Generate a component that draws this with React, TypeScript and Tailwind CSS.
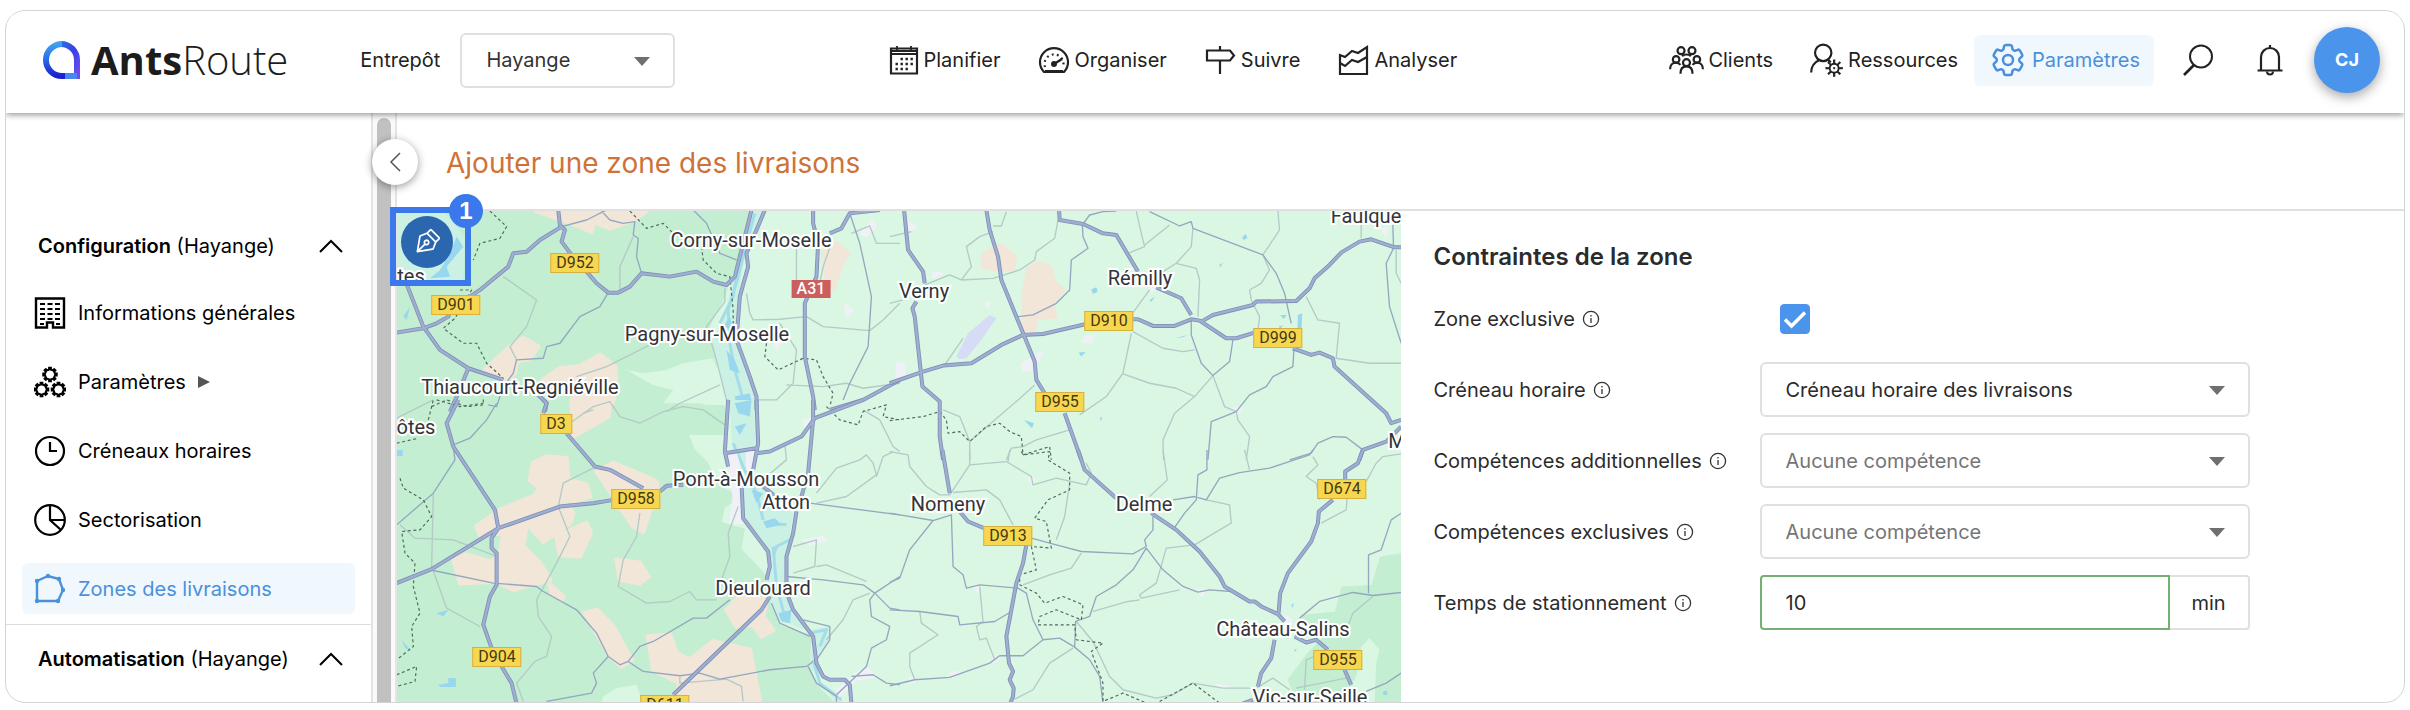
import React, { useState } from 'react'
import { HiOutlineCog6Tooth } from 'react-icons/hi2'
import { PiPenNib } from 'react-icons/pi'

/* ---------- Icons ---------- */

interface IconProps {
  className?: string
}

// Closed outline of a gear wheel with square teeth
function gearPath(cx: number, cy: number, teeth: number, outer: number, inner: number) {
  const step = (Math.PI * 2) / teeth
  const points: string[] = []
  for (let i = 0; i < teeth; i++) {
    const a = i * step - Math.PI / 2
    const corners = [
      [inner, a - step * 0.24],
      [outer, a - step * 0.17],
      [outer, a + step * 0.17],
      [inner, a + step * 0.24],
    ]
    corners.forEach(([r, t]) => points.push(`${(cx + r * Math.cos(t)).toFixed(2)} ${(cy + r * Math.sin(t)).toFixed(2)}`))
  }
  return `M${points.join('L')}Z`
}

function Icon({ className = 'size-8', children }: IconProps & { children: React.ReactNode }) {
  return (
    <svg
      viewBox="0 0 32 32"
      className={`shrink-0 ${className}`}
      fill="none"
      stroke="currentColor"
      strokeWidth="2"
      aria-hidden="true"
    >
      {children}
    </svg>
  )
}

function CalendarIcon() {
  return (
    <Icon>
      <path d="M3 4.5h26v25H3zM3 10h26" strokeWidth="2.2" />
      <path d="M3 7h26M9 2v5M23 2v5" strokeWidth="1.8" />
      <path d="M12.500 15h13" strokeWidth="2.400" strokeDasharray="2.400 2.600" />
      <path d="M7.500 20h18M7.500 25h13" strokeWidth="2.400" strokeDasharray="2.400 2.600" />
    </Icon>
  )
}

function GaugeIcon() {
  return (
    <Icon>
      <path d="M6 28a14 14 0 1 1 20 0z" strokeLinejoin="round" strokeWidth="2.2" />
      <path d="M7 27.500h18" strokeWidth="3" />
      <path d="M7 23a9.500 9.500 0 1 1 18 0" strokeDasharray="1.800 3.400" strokeWidth="2.200" />
      <circle cx="16" cy="20" r="2" fill="currentColor" />
      <path d="m16 20 8-5" strokeWidth="2.600" />
    </Icon>
  )
}

function SignpostIcon() {
  return (
    <Icon>
      <path d="M2 6.500h23l4 5-4 5H2zM15 2v4M15 17v13" strokeWidth="2.200" />
    </Icon>
  )
}

function ChartIcon() {
  return (
    <Icon>
      <path d="M2 30V11l5 2 7-6 6 2 9-6v27z" strokeWidth="2.200" />
      <path d="m2 19 5 3 7-6 6 2 9-5" strokeWidth="2.200" />
    </Icon>
  )
}

function ClientsIcon() {
  return (
    <Icon className="size-[35px]">
      <circle cx="11" cy="7" r="3.200" />
      <circle cx="21" cy="7" r="3.200" />
      <circle cx="6.500" cy="15" r="3" />
      <circle cx="25.500" cy="15" r="3" />
      <circle cx="16" cy="18" r="3.200" />
      <path d="M1 24c0-3.500 2-6 5.500-6 2 0 3 .8 4 2M31 24c0-3.500-2-6-5.500-6-2 0-3 .8-4 2M10.500 28c0-4 2-6.600 5.500-6.600s5.500 2.600 5.500 6.600" />
      <path d="M12 12c1-1 2.500-1.500 4-1.500s3 .5 4 1.500" />
    </Icon>
  )
}

function ResourcesIcon() {
  return (
    <Icon className="size-[35px]">
      <circle cx="13" cy="9" r="7.500" />
      <path d="M2 27c0-6 3-9.500 7.500-11.500M17 15.500l3 2" />
      <path d={gearPath(23, 23, 8, 8, 5)} fill="currentColor" stroke="none" />
      <circle cx="23" cy="23" r="3.200" fill="white" stroke="none" />
      <circle cx="23" cy="23" r="1" fill="currentColor" stroke="none" />
    </Icon>
  )
}

function SearchIcon() {
  return (
    <Icon>
      <circle cx="19" cy="12.500" r="11" />
      <path d="M12 21 2 31" strokeWidth="2.600" />
    </Icon>
  )
}

function BellIcon() {
  return (
    <Icon>
      <path d="M7 26V13a9 9 0 0 1 18 0v13M3.500 26.500h25M16 1v3" strokeWidth="2.200" />
      <path d="M13 27.500c0 4 6 4 6 0" />
    </Icon>
  )
}

function BuildingIcon() {
  return (
    <Icon>
      <path d="M2 1.500h28v29H19v-5h-6v5H2z" strokeWidth="2.400" />
      <path d="M6 7h20M6 12h20M6 17h20M6 22h20" strokeWidth="2" strokeDasharray="5 2.500" />
      <path d="M6 27h4M22 27h4" />
    </Icon>
  )
}

function GearsIcon() {
  return (
    <Icon>
      <path d={gearPath(16, 8.5, 8, 6.8, 5)} />
      <path d={gearPath(7.5, 23.5, 8, 6.8, 5)} />
      <path d={gearPath(24.5, 23.5, 8, 6.8, 5)} />
    </Icon>
  )
}

function ClockIcon() {
  return (
    <Icon>
      <circle cx="16" cy="16" r="14" strokeWidth="2.200" />
      <path d="M16 7v9h7" strokeWidth="2.200" />
    </Icon>
  )
}

function PieIcon() {
  return (
    <Icon>
      <circle cx="16" cy="16" r="14.800" strokeWidth="2.200" />
      <path d="M16 1v15l11 10M16 16h15" strokeWidth="2.200" />
    </Icon>
  )
}

function ZoneIcon() {
  const corners = [
    [3, 8],
    [14, 3],
    [25, 6],
    [29, 17],
    [24, 28],
    [3, 28],
  ]
  return (
    <Icon>
      <path d="M3 8 14 3l11 3 4 11-5 11H3z" strokeWidth="2.400" />
      {corners.map(([x, y]) => (
        <circle key={`${x}-${y}`} cx={x} cy={y} r="2.2" fill="currentColor" stroke="none" />
      ))}
    </Icon>
  )
}

function ChevronUp() {
  return (
    <svg viewBox="0 0 24 14" className="h-3.5 w-6" fill="none" stroke="currentColor" strokeWidth="2" aria-hidden="true">
      <path d="M1 13 12 2l11 11" />
    </svg>
  )
}

function Caret({ className }: IconProps) {
  return (
    <svg viewBox="0 0 16 9" className={className} fill="#6f6f6f" aria-hidden="true">
      <path d="M0 0h16L8 9z" />
    </svg>
  )
}

function InfoIcon() {
  return (
    <svg viewBox="0 0 18 18" className="size-[18px] shrink-0" fill="none" stroke="#333" aria-hidden="true">
      <circle cx="9" cy="9" r="7.600" strokeWidth="1.300" />
      <path d="M9 8v5M9 5v1.500" strokeWidth="1.300" />
    </svg>
  )
}

function Logo() {
  return (
    <a href="#" className="flex items-center gap-2.5 text-[#1c1c1c]" aria-label="AntsRoute">
      <svg viewBox="0 0 40 40" className="size-10" fill="none" aria-hidden="true">
        <defs>
          <linearGradient id="logo-right" x1="0" y1="0" x2="1" y2="1">
            <stop offset="0" stopColor="#2a6fe0" />
            <stop offset=".5" stopColor="#3a3fe6" />
            <stop offset="1" stopColor="#6b4df0" />
          </linearGradient>
          <linearGradient id="logo-left" x1="0" y1="0" x2="0" y2="1">
            <stop offset="0" stopColor="#3f9ff0" />
            <stop offset=".5" stopColor="#2b6ae6" />
            <stop offset="1" stopColor="#1a1fd0" />
          </linearGradient>
        </defs>
        <path d="M20 4a16 16 0 0 1 16 16v16H20" stroke="url(#logo-right)" strokeWidth="6" />
        <path d="M21 4a16 16 0 0 0 0 32h3" stroke="url(#logo-left)" strokeWidth="6" />
        <path d="M24 36h12" stroke="#4a86f0" strokeWidth="6" />
      </svg>
      <span className="font-['Open_Sans',sans-serif] text-[40px] leading-none font-light">
        <span className="font-bold">Ants</span>Route
      </span>
    </a>
  )
}

/* ---------- Map ---------- */

interface Tile {
  x: number
  y: number
  forest?: string
  clearing?: string
  fields?: string
  town?: string
  airport?: string
  valley?: string
  water?: string
  stream?: string
  minor: string
  medium: string
  border: string
  major: string
}

// Each tile is drawn at three units per pixel from its own corner
const tiles: Tile[] = [
  {
    x: -17,
    y: -101,
    forest: 'M40 290H1115L1080 430 1050 500 1030 560 985 650 1005 740 1010 830 1040 910H40Z',
    clearing: 'M740 780 790 790 860 780 910 760 1000 745 1030 830 1045 905 960 880 850 880 880 840 820 825Z',
    fields:
      'M470 303H800L760 330 690 355 640 335 635 365 600 350 560 335ZM390 710 430 685 475 710 450 745 410 755 405 790 370 815 315 780ZM490 810 540 775 600 770 660 735 705 770 710 830 690 910H575L580 850ZM1330 430 1370 400 1405 430 1390 450 1360 535 1345 530Z',
    town: 'M1440 370 1480 330 1490 345 1460 380ZM1395 580 1420 600 1400 620ZM1180 690 1210 690 1190 720Z',
    valley:
      'M50 303H190L255 380 250 510H50ZM1115 300H1150L1110 400 1095 440 1075 560 1070 690 1110 800 1130 905H1050L1010 740 1000 690 1040 600 1060 500 1085 420Z',
    water:
      'M230 380 250 410 200 470 210 500 150 505 180 480 210 430ZM1040 720 1065 750 1080 790 1050 780ZM1065 860 1110 850 1120 895 1070 890ZM1030 650 1050 620 1060 660ZM70 620 90 590 80 630Z',
    stream: 'M1125 310 1100 400 1075 500 1045 600 1050 700 1065 780 1085 850 1090 900M1080 440 1060 560 1020 640',
    minor:
      'M760 380 720 470 720 540M370 500 470 570 440 650 390 710 410 750M1035 535V575L980 650 1010 750 1045 890M1250 415V560M1355 400 1330 470 1320 520M1100 550 1110 610 1120 630 1200 628 1280 620 1330 650 1470 662 1510 630 1560 580M1200 640 1250 720 1240 820 1190 870 1130 870M1220 825 1330 830 1400 820 1450 835 1560 820M1415 370 1470 348 1490 400 1560 400M590 800 680 770 810 705M1020 825 900 880 860 905M640 900 610 910',
    medium:
      'M685 548 660 590 600 620 540 700 500 710 490 745 410 750 400 790 370 830 350 890 325 885M665 303 690 330 730 340 765 335 760 375 775 385 770 440 785 490M545 350 620 330 680 300M1410 310 1440 400 1475 560 1465 710 1410 820 1390 870M940 300 980 340 1020 430 1070 450',
    border:
      'M330 303 380 350 360 385 300 400 280 450M240 540 275 540 225 625 190 655 250 700 290 700 320 760 370 805M155 890 200 870 260 890 310 885 310 865M750 303 800 355 850 340 880 370M965 410 970 450 1010 490 1050 500 1060 600 1060 640M1160 700 1155 740 1195 780 1270 745 1310 750 1330 800 1360 850 1350 890',
    major:
      'M535 300 540 345 555 360 545 395 575 435M620 485 650 520 685 548 715 548 750 530 785 490 870 500 950 485 1000 515 1040 525 1065 500 1085 420 1115 300M545 350 480 390 440 425 400 430 385 470 300 540 270 560M215 590 205 620 170 640 130 655 50 668M75 510 130 650 180 720 265 775 370 810M265 775 235 850 210 905M470 850 500 880 495 905M1155 300 1130 360 1100 430 1105 470 1080 560 1070 690 1110 800 1130 860V900M1300 300V340L1315 400 1310 500 1275 580V740L1300 860 1305 900M1350 370 1385 355 1410 310 1500 300M1560 810 1450 870 1350 900',
  },
  {
    x: -17,
    y: 189,
    forest:
      'M40 20H1030L1035 100 920 100 940 150 980 190 1010 260 1075 290 1030 320 1020 370 1090 390 1080 450 1110 480 1165 540V600L1200 680 1290 710 1285 800 1310 860 1370 920H40Z',
    clearing: 'M670 890 710 865 770 855 790 912H665Z',
    fields:
      'M575 0H690L685 50 580 110ZM500 170 560 175 565 240 620 255 630 290 580 305 540 290 580 340 570 370 490 425 440 370 430 440 480 490 510 540 400 570 350 545 240 550 220 475 260 465 330 485 360 470 370 400 300 405 290 380 360 330 460 290 480 265 450 240 460 190ZM530 410 620 370 632 400 600 470 540 465ZM650 215 700 190 750 210 830 245 835 290 810 330 790 395 760 380 720 320ZM710 480 780 490 805 530 780 550 720 540ZM510 555 550 590 545 600 515 580ZM615 640 650 630 700 680 755 780 725 800 690 770ZM805 710 870 705 890 760 930 780 1000 725 1110 750 1140 905 880 900 900 850 820 810ZM1040 630 1080 590 1160 600 1150 650 1180 690 1145 710 1120 675 1070 680Z',
    town: 'M1040 150 1070 160 1090 250 1090 370 1050 370 1060 290ZM1100 150H1130L1125 210H1100ZM1270 60 1300 55 1280 95ZM1270 420 1330 410 1340 420 1290 435ZM1370 870 1430 820 1460 800 1490 830 1430 840 1380 890Z',
    valley:
      'M1050 0H1130V140L1110 200 1170 290 1240 340 1220 470 1215 550 1235 640 1290 690 1350 680V720L1300 780 1320 850 1400 912H1370L1290 800 1300 700 1200 660 1165 590 1170 455 1100 360 1060 200Z',
    water:
      'M170 640 205 630 190 650ZM175 855 205 850 205 835 228 835V862L180 862ZM65 720 95 755 75 745ZM1150 365 1185 355 1205 375 1160 385ZM50 150H68V168H50ZM1115 270 1150 280 1130 310ZM1065 10 1115 0 1110 50 1075 40ZM1065 80 1100 70 1080 105ZM1195 640 1235 630 1230 670 1205 665Z',
    stream: 'M1060 130 1090 200 1130 280 1150 360M1160 370 1220 375M1180 440 1190 560 1215 650M1300 780 1320 850 1385 900M1230 420 1190 440 1180 470M1290 700 1340 690 1320 740',
    minor:
      'M160 280 155 500 200 625 300 680M60 375 105 415 220 420 350 470M640 205 550 250 535 320 570 410 530 490 485 572 470 600 475 650 515 710 500 770 465 785 410 850 430 905M780 340 770 410 730 480 715 560 800 610 870 605 930 575 950 600 1010 600M50 55 160 0M690 5 720 50 780 70 850 35 910 20 970 30 1035 75M570 70 640 20 690 5M1075 320 1045 400 1050 470 1025 540M1240 440 1310 420 1305 500 1240 520M1310 500 1340 495 1400 520 1460 545M1310 280 1370 205 1440 180 1460 165 1480 190 1490 225 1400 290 1310 310M1450 30 1500 60 1540 140 1560 155M1490 230 1510 170 1540 155M1340 720 1390 660 1420 600 1470 580M900 830V850L1040 838 1085 860 1090 905M1215 130 1220 180 1160 230',
    medium:
      'M160 512 340 550 470 560 485 572 590 630 650 700 685 770 720 795 745 785 780 740 820 725 940 655 980 655 1050 600M745 785 790 815 900 828 960 820 1020 838 1170 810 1280 800 1300 785M685 770 640 820 650 850 635 880 500 905M220 135 270 115 320 60 350 10M220 140 225 180 160 280 50 375M1290 310 1560 345M1220 530 1330 540 1450 555 1485 580 1530 625 1560 630M1485 580 1560 530M1485 580 1470 600 1475 650 1530 680 1520 720 1475 745 1460 800 1370 885M1175 610 1200 670 1290 710M1415 830 1480 825 1520 850 1560 855M1270 660 1350 680 1350 720 1310 780M1285 800 1310 850 1370 890V912',
    border:
      'M50 130 115 115M145 60 160 0M60 235 70 265 130 300 155 350 120 390 65 395 75 460 105 490 100 560 120 640 95 680 100 740 50 780M50 825 110 800 105 845 50 860M170 0 240 20 310 10M1340 20 1380 60 1435 75 1450 35 1520 15 1510 50 1560 60',
    major:
      'M235 0 200 70 220 140 345 330 355 385 335 415 335 445 350 460V555L330 590 310 675 335 745M365 800 395 850 410 912M50 550 155 508 355 385 540 320 640 310 700 300M840 275 860 258 910 255M490 0 500 10 490 40M560 100 645 200 690 210 790 265M880 885 1145 630 1170 590M1045 0 1035 155 1045 200M1085 250 1090 355 1165 455 1170 500 1160 540M1130 0 1135 130 1120 210M1150 260 1200 300M1035 160 1130 145M1130 160 1170 155 1265 110 1305 55 1450 0M1300 0V60L1285 220 1265 290M1250 335 1240 400 1220 470V550M1225 590 1240 630 1300 710 1310 790 1330 830 1350 840H1395L1410 855 1415 912',
  },
  {
    x: 493,
    y: -11,
    fields:
      'M280 165 330 135 375 170 370 205 330 210 280 200ZM415 210 445 190 480 200 495 250 520 270 490 310 495 350 440 355 430 400 400 405 405 270Z',
    town: 'M20 490 45 490V530L20 535ZM395 490 460 455 430 510 400 515ZM585 410 615 405 605 430 580 425ZM55 65 80 80 55 100ZM130 215 160 220 130 235ZM285 310 300 305 295 325ZM780 255 810 260 785 275ZM1030 625 1060 625 1040 645ZM1475 85 1495 85 1490 110Z',
    airport: 'M200 470 235 400 300 345 320 355 275 420 230 475 210 478Z',
    water:
      'M605 268 620 262 624 275 610 282ZM1225 345 1238 340 1236 385 1224 388ZM1172 345 1192 345 1182 357ZM567 458 588 456 575 470ZM403 660 433 670 427 685ZM1058 112 1068 102 1074 114 1062 120ZM988 195 1000 188 992 202ZM780 300 796 290 785 306ZM1168 380 1180 375 1172 390ZM630 655 637 650 635 665ZM855 415 895 405 880 412Z',
    minor:
      'M350 35 335 78 310 78M505 60 495 115 440 155 435 180 390 210 310 235 215 240 180 225 105 255M215 240 245 200 230 140 270 110 310 95M740 33 755 100 765 140 720 158M765 135 840 75M910 85 905 140 860 190 820 215M860 190 920 205 930 240 925 350M780 270 725 345M1165 33 1170 90 1120 165 1140 210 1115 250 1080 270 1085 300 1110 350 1105 395M1250 290 1285 360 1350 370 1340 475 1440 490 1535 490M730 395 820 445 880 455 915 450M725 400 700 520 650 590 570 645M700 522 780 550 860 565 915 590 970 527 1005 620 1040 635 1045 660 1080 710 1070 780M915 590 855 640 820 720 822 780M435 555 385 600 240 725V780M160 630 210 650 240 725M220 415 165 495M540 690 440 720 400 740 365 745 350 780M0 310 40 300M0 110 65 95M1415 50V115M1520 150V220L1535 250',
    medium:
      'M578 72 580 110 595 145 545 180 540 270 500 310 430 345 385 350M780 35 870 78 905 65 910 85 1120 165 1160 220 1185 280 1205 370M905 358V405L935 490 970 527 1020 485 1030 420M1213 450 1210 500 1150 530 1130 560 1080 585 1040 635 965 665 955 780M580 72 600 45 640 35 680 33M1512 145 1490 190 1500 320 1535 430M1510 75 1512 140M1200 780 1265 760 1285 730 1330 710 1370 712 1420 750',
    border:
      'M0 662 100 650 150 635 170 660 175 700 210 695 240 725 290 680 330 670 360 695 395 710 400 765 480 740 485 780',
    major:
      'M43 30 55 150 100 215 105 250M80 305 68 325 75 350 98 560 150 605V710L160 780M290 30 300 90 325 170 335 240 435 485 440 540 465 580M525 640 575 780M0 550 100 515 160 497 245 490 335 435 400 405 460 402 590 372M725 358 745 358 790 378 855 378 905 358 930 362 1010 415 1040 415 1095 398M1210 445 1265 465 1290 458 1330 475 1335 500 1490 640 1505 670 1535 660M508 30 510 60 580 72 640 100 680 105 745 215M800 262 875 295 905 345M935 365 970 345 1090 315 1100 305 1220 303 1260 265 1275 235 1320 195 1355 158 1410 125 1445 118 1515 142 1535 142M1410 780 1420 750 1490 725 1535 680',
  },
  {
    x: 493,
    y: 239,
    forest: 'M1535 315 1475 325 1450 410 1360 415 1340 490 1240 500 1310 560 1260 610 1200 690 1230 762H1535Z',
    clearing: 'M1440 565 1470 600 1460 640 1455 762H1350L1400 680 1415 590Z',
    town: 'M415 85 435 85 430 105ZM250 410 275 405 265 430ZM920 420 950 420 935 440ZM310 620 330 625 310 640ZM60 680 85 690 60 700ZM980 705 1020 710 1000 720ZM1170 500 1200 500 1210 525 1190 530ZM180 670 210 665 190 685Z',
    water: 'M1205 465 1212 460 1210 475ZM1480 725 1492 722 1494 735 1482 736ZM1213 600 1222 598 1218 606Z',
    minor:
      'M0 5 55 15 60 50 110 110 150 135 180 135 240 45 350 35M240 45V0M355 35 360 0M190 128 290 120 330 150 370 225M350 35 425 80 430 105 500 85 590 105 605 70 590 40M540 100 525 200 500 270M575 310 545 355 480 375 400 405M820 0 833 90 780 140M950 150 1020 165 1025 220 990 240 915 285 830 295 800 400 750 435 755 445 870 420M750 450 715 455 610 485M270 410 280 515 260 530 270 570 290 565 315 630M90 485 95 520 145 555 60 610 60 650 75 690M560 515 610 575 660 680 700 720 800 745 850 735 910 700 1000 715 1100 715 1150 685 1200 720M550 595 480 640 430 720 375 748M1270 20 1285 45 1250 80 1280 100 1290 150M1375 120 1370 180 1295 220M1430 95 1460 40 1480 20 1535 12M1450 440 1390 490 1375 530M1245 720 1250 630 1320 600M1065 0 1080 60M1220 715 1370 685',
    medium:
      'M0 190 130 212 185 195 190 350 220 375 230 415 270 405 385 415 410 430 430 510 460 570 510 565 555 592M130 212 60 300 30 385 0 398M425 265 500 285 575 305 730 312 770 290 765 270 790 240 790 200M770 295 820 360 880 410 925 427 960 420 1025 425M770 295 730 360 680 405 620 440 600 500 558 515 555 592 600 630 630 680 640 760M0 480 90 485 205 500 210 525 315 515 365 485M0 708 75 690 180 683 300 640 330 618 400 618 460 570M850 150 915 140 950 150 990 85 1050 68 1140 55 1260 15 1270 0M952 0V60L925 75 920 150 885 190 850 240M1230 505 1290 455 1390 428 1450 437 1535 428M1437 430V315L1475 300 1505 210 1535 190M1430 725 1490 700 1535 670',
    border:
      'M395 5 400 15 480 5 475 30 540 70V120L475 150 435 205 470 215 485 295 425 290 440 360 390 375V405L440 430 465 460 520 440 580 465 575 510 500 480 450 500 445 525 555 525 560 570 640 580 605 605 640 700V755L700 730 770 760M810 755 910 700 990 760',
    major:
      'M158 0 180 130M210 185 235 215 290 238M410 285 400 340 380 400 350 560 358 640 370 665 360 690 372 715 370 740 360 765M565 0 585 60 680 145M785 190 860 240 930 305 990 380 1005 410 1080 455H1095L1115 470 1165 493 1185 515M1215 560 1250 578 1280 570 1315 600M1365 660 1385 705M1420 0 1405 40 1367 65V90M1330 150 1288 185 1285 220 1265 275 1195 370 1172 430 1167 490M1155 570 1145 625 1115 670 1105 710M1090 750 1050 765',
  },
]

const places = [
  { name: 'tes', x: 14, y: 65 },
  { name: 'Corny-sur-Moselle', x: 354, y: 29 },
  { name: 'Pagny-sur-Moselle', x: 310, y: 123 },
  { name: 'Thiaucourt-Regniéville', x: 123, y: 176 },
  { name: 'ôtes', x: 19, y: 216 },
  { name: 'Verny', x: 527, y: 80 },
  { name: 'Rémilly', x: 743, y: 67 },
  { name: 'Faulque', x: 969, y: 5 },
  { name: 'M', x: 1000, y: 230 },
  { name: 'Pont-à-Mousson', x: 349, y: 268 },
  { name: 'Atton', x: 389, y: 291 },
  { name: 'Nomeny', x: 551, y: 293 },
  { name: 'Delme', x: 747, y: 293 },
  { name: 'Dieulouard', x: 366, y: 377 },
  { name: 'Château-Salins', x: 886, y: 418 },
  { name: 'Vic-sur-Seille', x: 913, y: 486 },
]

const roads = [
  { name: 'D952', x: 178, y: 52 },
  { name: 'D901', x: 59, y: 94 },
  { name: 'D3', x: 159, y: 213 },
  { name: 'D958', x: 239, y: 288 },
  { name: 'D904', x: 100, y: 446 },
  { name: 'D611', x: 268, y: 494 },
  { name: 'D910', x: 712, y: 110 },
  { name: 'D999', x: 881, y: 127 },
  { name: 'D955', x: 663, y: 191 },
  { name: 'D674', x: 945, y: 278 },
  { name: 'D913', x: 611, y: 325 },
  { name: 'D955', x: 941, y: 449 },
]

function ZoneMap() {
  return (
    <div className="absolute inset-0 overflow-hidden bg-[#daf7e4] font-[Roboto,sans-serif]">
      <svg
        viewBox="0 0 1004 492"
        preserveAspectRatio="xMinYMin slice"
        className="absolute inset-0 size-full"
        fill="none"
        strokeLinejoin="round"
        aria-hidden="true"
      >
        {tiles.map((t) => (
          <g key={`${t.x},${t.y}`} transform={`translate(${t.x} ${t.y}) scale(${1 / 3})`}>
            <path d={t.forest} fill="#c3eed2" stroke="#c3eed2" strokeWidth="10" />
            <path d={t.clearing} fill="#daf7e4" />
            <path d={t.fields} fill="#f1e6d8" stroke="#f1e6d8" strokeWidth="14" />
            <path d={t.valley} fill="#cbf1e4" />
            <path d={t.stream} stroke="#a3ddea" strokeWidth="9" />
            <path d={t.water} fill="#98d7ee" />
            <path d={t.town} fill="#f0f1f6" stroke="#f0f1f6" strokeWidth="4" />
            <path d={t.airport} fill="#d6dcf6" />
          </g>
        ))}
        {tiles.map((t) => (
          <g key={`${t.x},${t.y}`} transform={`translate(${t.x} ${t.y}) scale(${1 / 3})`}>
            <path d={t.minor} stroke="#b3cac6" strokeWidth="4" />
            <path d={t.medium} stroke="#94a7bf" strokeWidth="4" />
            <path d={t.border} stroke="#4e6a5c" strokeWidth="3.5" strokeDasharray="9 8" />
            <path d={t.major} stroke="#7e8fb8" strokeWidth="12" />
            <path d={t.major} stroke="#a0aed0" strokeWidth="7" />
          </g>
        ))}
      </svg>
      {roads.map((r) => (
        <span
          key={`${r.name}-${r.x}`}
          className="absolute -translate-x-1/2 -translate-y-1/2 border border-[#d6b041] bg-[#f8d750] px-[5px] text-base leading-[18px] text-[#443a10]"
          style={{ left: r.x, top: r.y }}
        >
          {r.name}
        </span>
      ))}
      <span className="absolute top-[78px] left-[414px] -translate-x-1/2 -translate-y-1/2 bg-[#cb5f60] px-[5px] text-base leading-[18px] font-medium text-white">
        A31
      </span>
      {places.map((p) => (
        <span
          key={p.name}
          className="absolute -translate-x-1/2 -translate-y-1/2 text-xl leading-6 whitespace-nowrap text-[#333438] [-webkit-text-stroke:4px_white] [paint-order:stroke_fill]"
          style={{ left: p.x, top: p.y }}
        >
          {p.name}
        </span>
      ))}
    </div>
  )
}

/* ---------- Header ---------- */

interface NavLinkProps {
  icon: React.ReactNode
  label: string
  active?: boolean
}

function NavLink({ icon, label, active = false }: NavLinkProps) {
  return (
    <a
      href="#"
      className={`flex items-center gap-1 rounded-md ${active ? 'h-[51px] bg-[#f0f7fd] px-3.5 text-[#4a90dc]' : ''}`}
      aria-current={active ? 'page' : undefined}
    >
      {icon}
      {label}
    </a>
  )
}

function Header() {
  return (
    <header className="relative z-20 flex h-[102px] shrink-0 items-center justify-between bg-white pr-6 pb-1 pl-[35px] shadow-[0_2px_6px_rgba(0,0,0,0.4)]">
      <div className="flex items-center">
        <Logo />
        <label htmlFor="depot" className="mr-5 ml-[72px]">
          Entrepôt
        </label>
        <div className="relative">
          <select
            id="depot"
            className="h-[55px] w-[215px] appearance-none rounded-md border-2 border-[#e0e0e0] bg-white pl-6 text-[#333]"
          >
            <option>Hayange</option>
          </select>
          <Caret className="pointer-events-none absolute top-6 right-[25px] h-[9px] w-4" />
        </div>
      </div>
      <nav className="flex items-center gap-[38px]">
        <NavLink icon={<CalendarIcon />} label="Planifier" />
        <NavLink icon={<GaugeIcon />} label="Organiser" />
        <NavLink icon={<SignpostIcon />} label="Suivre" />
        <NavLink icon={<ChartIcon />} label="Analyser" />
      </nav>
      <nav className="flex items-center">
        <div className="mr-4 flex items-center gap-9">
          <NavLink icon={<ClientsIcon />} label="Clients" />
          <NavLink icon={<ResourcesIcon />} label="Ressources" />
        </div>
        <NavLink icon={<HiOutlineCog6Tooth className="size-10" />} label="Paramètres" active />
        <button type="button" className="ml-7" aria-label="Rechercher">
          <SearchIcon />
        </button>
        <button type="button" className="ml-10" aria-label="Notifications">
          <BellIcon />
        </button>
        <button
          type="button"
          className="ml-7 size-[66px] rounded-full bg-[#4a94ec] text-lg font-bold text-white shadow-[0_4px_12px_rgba(0,0,0,0.35)]"
        >
          CJ
        </button>
      </nav>
    </header>
  )
}

/* ---------- Sidebar ---------- */

const menu = [
  { label: 'Informations générales', icon: <BuildingIcon /> },
  { label: 'Paramètres', icon: <GearsIcon />, expandable: true },
  { label: 'Créneaux horaires', icon: <ClockIcon /> },
  { label: 'Sectorisation', icon: <PieIcon /> },
  { label: 'Zones des livraisons', icon: <ZoneIcon />, active: true },
]

function SectionToggle({ title }: { title: string }) {
  return (
    <button type="button" className="flex h-[51px] w-full items-center justify-between pr-7 pl-8">
      <span>
        <span className="font-semibold">{title}</span> (Hayange)
      </span>
      <ChevronUp />
    </button>
  )
}

function Sidebar() {
  return (
    <aside className="flex w-[391px] shrink-0 text-black">
      <div className="flex-1 overflow-hidden pt-[107px]">
        <SectionToggle title="Configuration" />
        <ul className="mx-4 mt-4 flex flex-col gap-[18px] pb-2.5">
          {menu.map((item) => (
            <li key={item.label}>
              <a
                href="#"
                className={`flex h-[51px] items-center gap-3 rounded-md pl-3 ${
                  item.active ? 'bg-[#f0f7fd] text-[#4a90dc]' : ''
                }`}
              >
                {item.icon}
                {item.label}
                {item.expandable && (
                  <svg viewBox="0 0 12 12" className="size-3" fill="#555" aria-hidden="true">
                    <path d="M0 0v12l12-6z" />
                  </svg>
                )}
              </a>
            </li>
          ))}
        </ul>
        <div className="border-t border-[#dcdcdc] pt-2">
          <SectionToggle title="Automatisation" />
        </div>
      </div>
      <div className="flex w-[26px] justify-center border-x-2 border-[#e4e4e4] bg-[#fafafa] pt-[5px]">
        <div className="w-3.5 rounded-t-full bg-[#c1c1c1]" />
      </div>
    </aside>
  )
}

/* ---------- Form ---------- */

function FieldLabel({ htmlFor, children }: { htmlFor: string; children: React.ReactNode }) {
  return (
    <label htmlFor={htmlFor} className="flex items-center gap-[7px]">
      {children}
      <InfoIcon />
    </label>
  )
}

function SelectField({ id, label, value, muted = false }: { id: string; label: string; value: string; muted?: boolean }) {
  return (
    <>
      <FieldLabel htmlFor={id}>{label}</FieldLabel>
      <div className="relative">
        <select
          id={id}
          className={`h-[55px] w-full appearance-none rounded-md border-2 border-[#e0e0e0] bg-white pl-6 ${
            muted ? 'text-[#757575]' : 'text-[#2b2b2b]'
          }`}
        >
          <option>{value}</option>
        </select>
        <Caret className="pointer-events-none absolute top-6 right-[25px] h-[9px] w-4" />
      </div>
    </>
  )
}

function ZoneForm() {
  const [exclusive, setExclusive] = useState(true)
  const [parkingTime, setParkingTime] = useState('10')

  return (
    <form className="min-w-0 pt-[30px] pl-[33px] text-[#2b2b2b]">
      <h2 className="text-2xl leading-8 font-semibold">Contraintes de la zone</h2>
      <div className="mt-[18px] grid auto-rows-[55px] grid-cols-[326px_minmax(0,490px)] gap-y-4">
        <FieldLabel htmlFor="exclusive">Zone exclusive</FieldLabel>
        <div className="flex items-center pl-5">
          <span className="relative size-[30px]">
            <input
              id="exclusive"
              type="checkbox"
              checked={exclusive}
              onChange={(e) => setExclusive(e.target.checked)}
              className="size-[30px] appearance-none rounded-sm border border-[#4a94ec] checked:bg-[#4a94ec]"
            />
            {exclusive && (
              <svg
                viewBox="0 0 30 30"
                className="pointer-events-none absolute inset-0 size-[30px]"
                fill="none"
                stroke="white"
                strokeWidth="3.5"
                aria-hidden="true"
              >
                <path d="m5 15.500 6.500 6.500L25 8.500" />
              </svg>
            )}
          </span>
        </div>
        <SelectField id="slot" label="Créneau horaire" value="Créneau horaire des livraisons" />
        <SelectField id="extra" label="Compétences additionnelles" value="Aucune compétence" muted />
        <SelectField id="only" label="Compétences exclusives" value="Aucune compétence" muted />
        <FieldLabel htmlFor="parking">Temps de stationnement</FieldLabel>
        <div className="flex">
          <input
            id="parking"
            type="text"
            inputMode="numeric"
            value={parkingTime}
            onChange={(e) => setParkingTime(e.target.value)}
            className="min-w-0 flex-1 rounded-l-sm border-2 border-[#74b072] pl-6 outline-none"
          />
          <span className="flex w-20 items-center justify-center rounded-r-sm border-2 border-l-0 border-[#e0e0e0]">
            min
          </span>
        </div>
      </div>
    </form>
  )
}

/* ---------- Page ---------- */

export default function App() {
  return (
    <div className="h-screen min-h-[600px] bg-white px-[5px] pt-2.5 pb-[7px] font-[Inter,sans-serif] text-xl text-[#222]">
      <div className="flex h-full flex-col overflow-hidden rounded-[20px] border border-[#d4d4d4]">
        <Header />
        <div className="flex min-h-0 flex-1">
          <Sidebar />
          <main className="relative flex min-w-0 flex-1 flex-col">
            <button
              type="button"
              className="absolute top-[26px] -left-[25px] z-10 flex size-[46px] items-center justify-center rounded-full bg-white shadow-[0_2px_8px_rgba(0,0,0,0.4)]"
              aria-label="Réduire le menu"
            >
              <svg viewBox="0 0 12 20" className="h-5 w-3" fill="none" stroke="#555" strokeWidth="1.5" aria-hidden="true">
                <path d="M11 1 2 10l9 9" />
              </svg>
            </button>
            <div className="flex h-[98px] shrink-0 items-center border-b-2 border-[#e0e0e0] pt-1 pl-[49px]">
              <h1 className="text-[28px] leading-8 text-[#cf7238]">Ajouter une zone des livraisons</h1>
            </div>
            <div className="grid min-h-0 flex-1 grid-cols-2">
              <div className="relative">
                <ZoneMap />
                {/* Tutorial marker around the drawing tool */}
                <div className="absolute -top-1 -left-[7px] h-[79px] w-[81px] border-[6px] border-[#3b78ec]">
                  <button
                    type="button"
                    className="absolute top-[3px] left-[5px] flex size-[52px] items-center justify-center rounded-full bg-[#2a67ae] text-white"
                    aria-label="Dessiner la zone"
                  >
                    <PiPenNib className="size-7" />
                  </button>
                  <span className="absolute -top-[19px] -right-[18px] flex size-[34px] items-center justify-center rounded-full bg-[#3b78ec] font-['Liberation_Sans',sans-serif] text-2xl font-bold text-white">
                    1
                  </span>
                </div>
              </div>
              <ZoneForm />
            </div>
          </main>
        </div>
      </div>
    </div>
  )
}
